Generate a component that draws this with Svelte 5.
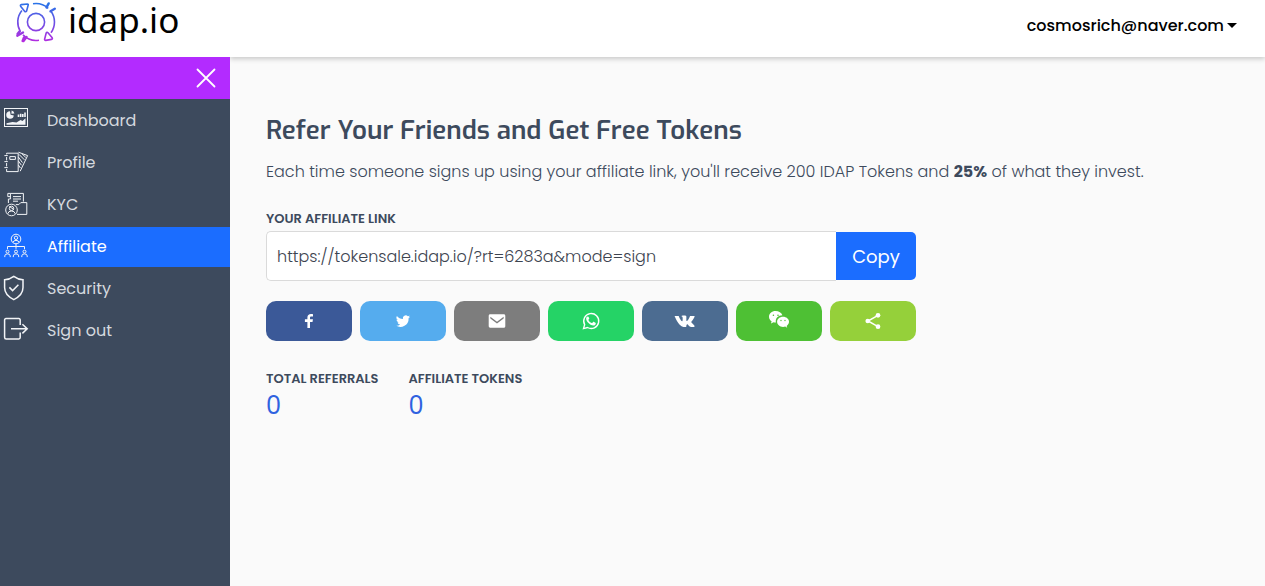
<script lang="ts">
	let open = $state(true);
	let active = $state("Affiliate");
	let link = $state("https://tokensale.idap.io/?rt=6283a&mode=sign");

	const menu = ["Dashboard", "Profile", "KYC", "Affiliate", "Security", "Sign out"];

	const stats = [
		{ label: "Total referrals", value: 0 },
		{ label: "Affiliate tokens", value: 0 },
	];

	function copyLink() {
		navigator.clipboard?.writeText(link);
	}
</script>

<svelte:head>
	<title>Affiliate</title>
</svelte:head>

{#snippet person(x, y)}
	<circle cx={x} cy={y} r="1.5" />
	<path d="M{x - 2.7} {y + 5.5}v-1.2q0-2 2.7-2t2.7 2v1.2" />
{/snippet}

<div class="page">
	<header>
		<a class="logo" href="/" aria-label="idap.io">
			<svg class="mark" width="42" height="44" viewBox="0 0 42 44" fill="none" stroke="url(#brand)" stroke-width="1.6">
				<defs>
					<linearGradient id="brand" gradientUnits="userSpaceOnUse" x1="22" y1="3" x2="20" y2="42">
						<stop offset="0" stop-color="#2874e8" />
						<stop offset="1" stop-color="#b52be0" />
					</linearGradient>
				</defs>
				<circle cx="21" cy="22" r="8.6" />
				<path d="M18 3.8a18.4 18.4 0 0 1 15.2 4.6M36 11.3a18.4 18.4 0 0 1 0 21.5M24 40.2a18.4 18.4 0 0 1-16-5.3M5.5 31.8a18.4 18.4 0 0 1 1.4-21.3" />
				<path d="M6.4 4.6l6-.6q1 0 .8 1l-1.6 6q-1 1.4-2 .2L5.6 6.2q-.6-1.2.8-1.6zM31.2 33q.8-1.2 1.8-.2l4.2 5q.6 1-.6 1.600l-6 1q-1.200 0-1-1.200z" stroke-linejoin="round" />
				<path d="M31.5 7.4l2.2-4M35.5 11.3l4.3-2.6M8 32.5l-5.700 3.200M4.500 31.500L2.500 34M11.500 37L8.500 41M9 37.500L7.600 41" stroke-width="2.4" stroke-linecap="round" />
			</svg>
			<span>idap.io</span>
		</a>
		<div class="topbar">
			<button class="account" type="button">cosmosrich@naver.com<i class="caret"></i></button>
		</div>
	</header>

	<div class="body">
		<aside class:closed={!open}>
			<div class="toggle">
				<button type="button" aria-label="Toggle menu" onclick={() => (open = !open)}>
					<svg width="20" height="20" viewBox="0 0 20 20" stroke="#fff" stroke-width="1.8" stroke-linecap="round">
						<path d="M1.5 1.5l17 17M18.5 1.5l-17 17" />
					</svg>
				</button>
			</div>
			<nav>
				{#each menu as item}
					<a href="#{item}" class:active={active === item} onclick={() => (active = item)}>
						<svg width="26" height="26" viewBox="0 0 26 26" fill="none" stroke="#f2f4f7" stroke-width="1">
							{#if item === "Dashboard"}
								<rect x="1.5" y="1.5" width="23" height="18" />
								<g transform="translate(0 -1)" fill="#f2f4f7" stroke="none">
									<path d="M7 5.2a3.8 3.8 0 1 0 3.8 4.4L7.6 8.8z" />
									<path d="M8.6 4.5a3.6 3.6 0 0 1 2.8 3L8.4 7.7z" />
									<path d="M3.5 18.8v-1.6l6-1.2 4 .6 4-2.5 2 .8 3-2.6v6.5z" />
								</g>
								<path d="M15.5 10V7.5M17.7 10V6.8M19.8 10V7M22 10V5.5" stroke-width="1.6" />
							{:else if item === "Profile"}
								<path d="M3.6 5.4V4.2h11.6v18.4H3.6V20M3.6 8v3.4M3.6 14v3.4M1.4 6.6h3.4M1.4 12.6h3.4M1.4 18.6h3.4" />
								<path d="M6.8 7.6h5.6v2.8H6.8zM15.4 3.2l9.2 3.4-7.4 15.6M15.4 8l4 5.6M15.4 12l3 4.2M15.4 16l2 3M16 5.4l5.4 5.4M19 4.8l3.8 3.6" />
							{:else if item === "KYC"}
								<path d="M5.4 12V8h2V2.4h13v8.2M7.4 2.4H4.8v3.2h2.6M10 5.6h8M10 8h8M10 10.2h5" />
								<path d="M14 23.4h9.8V11.6h-6l-2 2h-3" />
								<circle cx="8.5" cy="19" r="5.8" />
								<circle cx="8.5" cy="17.4" r="2.2" />
								<path d="M4.9 22.6q.4-2.6 3.6-2.6t3.6 2.6M6.3 15.4l4.4 3" />
							{:else if item === "Affiliate"}
								<circle cx="13" cy="6" r="4.8" />
								<circle cx="13" cy="4.8" r="1.7" />
								<path d="M10 9.4q.4-2 3-2t3 2M13 10.8v5M4.5 16v-2.5h17V16" />
								{@render person(4.5, 18.6)}
								{@render person(13, 18.6)}
								{@render person(21.5, 18.6)}
							{:else if item === "Security"}
								<path d="M10.8 1.4q4.2 3.2 9.2 3.4v7.8q0 7.6-9.2 12-9.2-4.4-9.2-12V4.8q5-.2 9.2-3.4z" stroke-width="1.5" />
								<path d="M6.4 12.4l3.2 3.2 5.8-5.8" stroke-width="1.5" />
							{:else}
								<path d="M17.2 8V3q0-1.4-1.4-1.4H3Q1.6 1.6 1.6 3v17.2q0 1.8 1.6 1.8h12.6q1.4 0 1.4-1.4v-5.2M8 11.8h16M19.4 7.2l4.8 4.6-4.8 4.6" stroke-width="1.5" />
							{/if}
						</svg>
						<span>{item}</span>
					</a>
				{/each}
			</nav>
		</aside>

		<main>
			<h1>Refer Your Friends and Get Free Tokens</h1>
			<p>
				Each time someone signs up using your affiliate link, you'll receive 200 IDAP Tokens and
				<b>25%</b> of what they invest.
			</p>

			<div class="share">
				<label for="link">Your affiliate link</label>
				<div class="field">
					<input id="link" type="text" readonly bind:value={link} />
					<button type="button" onclick={copyLink}>Copy</button>
				</div>
				<div class="social">
					<button type="button" class="facebook" aria-label="Facebook">
						<svg viewBox="0 0 40 40"><path d="M22 34V22h5l.9-5.6H22v-2.7c0-1.7.9-2.5 2.6-2.5H28V6.4C27 6.2 25.6 6 24 6c-4.4 0-7.2 2.6-7.2 7.1v3.3h-5V22h5v12z" /></svg>
					</button>
					<button type="button" class="twitter" aria-label="Twitter">
						<svg viewBox="0 0 40 40"><path d="M34.2 11.5c-1 .5-2.1.8-3.3.9 1.2-.7 2.1-1.8 2.5-3.2-1.1.7-2.4 1.1-3.7 1.4a5.8 5.8 0 0 0-9.9 5.3c-4.8-.2-9.1-2.6-12-6.1a5.8 5.8 0 0 0 1.8 7.8c-1 0-1.9-.3-2.6-.7 0 2.8 2 5.2 4.6 5.8-.8.2-1.7.2-2.6.1.7 2.3 2.9 4 5.4 4A11.7 11.7 0 0 1 5.8 29.2a16.5 16.5 0 0 0 25.4-14.7c1.1-.8 2.2-1.8 3-3z" /></svg>
					</button>
					<button type="button" class="email" aria-label="Email">
						<svg viewBox="0 0 40 40"><path fill-rule="evenodd" d="M6.3 6.7h27.4c1.6 0 2.9 1.3 2.9 3v20.6c0 1.7-1.3 3-2.9 3H6.3a3 3 0 0 1-2.9-3V9.7c0-1.7 1.3-3 2.9-3zM20 21.7L6.7 11.5v3.3L20 25l13.3-10.2v-3.3z" /></svg>
					</button>
					<button type="button" class="whatsapp" aria-label="WhatsApp">
						<svg viewBox="0 0 40 40">
							<path d="M5 35.2l2.3-8A15 15 0 1 1 13 33z" fill="none" stroke="#fff" stroke-width="2.8" />
							<path d="M14.9 11.6c-.4-.8-.8-.8-1.3-.8-1.4 0-3.3 1.5-3.3 4.6 0 3 2.2 6 4.2 8.2 2.6 2.8 6.4 5.4 10.3 5.4 2.6 0 4.8-1.9 4.8-4.6 0-.6-.3-.8-.8-1l-3.5-1.7c-.6-.2-.9-.1-1.3.4l-1.4 1.8c-.3.4-.7.4-1.2.2-3-1.3-5-3.2-6.4-5.7-.3-.5-.1-.8.2-1.2l1.2-1.5c.2-.4.2-.7.1-1z" />
						</svg>
					</button>
					<button type="button" class="vk" aria-label="VK">
						<svg viewBox="0 -2 40 40"><path d="M19 30h2.3s.7-.1 1.1-.5c.3-.4.3-1 .3-1s0-3.3 1.5-3.8c1.5-.5 3.3 3.2 5.3 4.5 1.5 1 2.6.8 2.6.8l5.3-.1s2.8-.2 1.5-2.4c-.1-.2-.8-1.6-4-4.6-3.4-3.1-2.9-2.6 1.2-8 2.5-3.3 3.4-5.3 3.1-6.2-.3-.8-2.2-.6-2.2-.6h-6s-.4-.1-.8.1c-.3.2-.5.7-.5.7s-1 2.5-2.2 4.7c-2.6 4.5-3.7 4.7-4.1 4.4-1-.7-.7-2.6-.7-4 0-4.3.6-6.1-1.3-6.6-.6-.1-1.1-.2-2.7-.3-2.1 0-3.9 0-4.9.5-.7.3-1.2 1.1-.9 1.1.4.1 1.3.3 1.8.9.6.9.6 2.8.6 2.8s.4 5.3-.8 6c-.9.4-2-.5-4.5-4.9C8.7 11.3 7.8 8.9 7.8 8.9s-.2-.4-.5-.7c-.4-.3-1-.4-1-.4H.7s-.9 0-1.2.4c-.3.3 0 1 0 1s4.4 10.5 9.4 15.7C13.5 29.9 19 30 19 30z" /></svg>
					</button>
					<button type="button" class="wechat" aria-label="WeChat">
						<svg viewBox="0 2 40 40">
							<path d="M13 2C5.500 2 0 7 0 13.5c0 3.9 2 7 5.2 9.2L4 27l5-2.7c1.6.4 3 .6 4.8.6-1.6-8.3 4.6-14.3 13-14.3C25.3 5.4 19.6 2 13 2z" />
							<path d="M40 23.7c0-5.600-5.400-10-11.800-10-6.800 0-12 4.400-12 10s5.200 10.200 12 10.200c1.400 0 2.800-.3 4.200-.7l4 2.200-1.100-3.600c2.800-2.100 4.700-4.900 4.700-8.100z" />
							<g fill="#4ec034">
								<circle cx="8.8" cy="10.4" r="1.6" />
								<circle cx="18" cy="10.4" r="1.6" />
								<circle cx="24" cy="21" r="1.3" />
								<circle cx="32" cy="21" r="1.3" />
							</g>
						</svg>
					</button>
					<button type="button" class="more" aria-label="Share">
						<svg viewBox="0 0 40 40">
							<path d="M30 8.7L10 20l20 11.3" fill="none" stroke="#fff" stroke-width="3" />
							<circle cx="30" cy="8.7" r="4.7" />
							<circle cx="9.5" cy="20" r="4.7" />
							<circle cx="30" cy="31.3" r="4.7" />
						</svg>
					</button>
				</div>
			</div>

			<dl>
				{#each stats as stat}
					<div>
						<dt>{stat.label}</dt>
						<dd>{stat.value}</dd>
					</div>
				{/each}
			</dl>
		</main>
	</div>
</div>

<style>
	:global(body) {
		margin: 0;
		background: #fafafa;
	}

	.page {
		display: flex;
		flex-direction: column;
		min-height: 100vh;
		font-family: Poppins, Inter, sans-serif;
		font-size: 16px;
		color: #3d4a5d;
	}

	button,
	input {
		font: inherit;
		margin: 0;
		border: 0;
		box-sizing: border-box;
	}

	button {
		padding: 0;
		background: none;
		cursor: pointer;
	}

	header {
		display: flex;
		height: 57px;
	}

	.logo {
		display: flex;
		box-sizing: border-box;
		width: 230px;
		padding-left: 15px;
		gap: 11px;
		background: #fff;
		color: #000;
		text-decoration: none;
		font-family: "Noto Sans", "Open Sans", sans-serif;
		font-size: 35px;
		font-weight: 400;
		line-height: 40px;
	}

	.topbar {
		display: flex;
		flex: 1;
		justify-content: flex-end;
		align-items: center;
		padding: 0 28px 6px 0;
		background: #fff;
		box-shadow: 0 2px 5px rgba(0, 0, 0, 0.2);
		clip-path: inset(0 0 -8px 0);
	}

	.account {
		display: flex;
		align-items: center;
		gap: 3px;
		color: #000;
		font-weight: 500;
	}

	.caret {
		border: 5px solid transparent;
		border-top-color: #000;
		border-bottom: 0;
	}

	.body {
		display: flex;
		flex: 1;
	}

	aside {
		flex: none;
		width: 230px;
		background: #3d4a5d;
	}

	aside.closed {
		width: 42px;
		overflow: hidden;
	}

	.toggle {
		display: flex;
		justify-content: flex-end;
		align-items: center;
		height: 42px;
		padding-right: 14px;
		background: #b32bff;
	}

	.toggle button {
		display: flex;
	}

	nav a {
		display: flex;
		align-items: center;
		gap: 18px;
		box-sizing: border-box;
		height: 40px;
		margin-top: 2px;
		padding: 0 0 2px 3px;
		color: #d5d9df;
		text-decoration: none;
	}

	nav a.active {
		background: #1b6dff;
		color: #fff;
	}

	main {
		flex: 1;
		padding: 57px 36px;
	}

	h1 {
		margin: 0 0 14px;
		font-family: Exo, Roboto, sans-serif;
		font-size: 26px;
		font-weight: 600;
		line-height: 34px;
	}

	p {
		margin: 0 0 29px;
		font-weight: 300;
		line-height: 20px;
	}

	b {
		font-weight: 700;
	}

	.share {
		max-width: 650px;
	}

	label,
	dt {
		display: block;
		font-size: 13px;
		font-weight: 600;
		line-height: 16px;
		text-transform: uppercase;
	}

	.field {
		display: flex;
		height: 50px;
		margin: 4px 0 20px;
	}

	.field input {
		flex: 1;
		min-width: 0;
		padding: 0 10px;
		border: 1px solid #dadada;
		border-right: 0;
		border-radius: 5px 0 0 5px;
		background: #fff;
		color: #3d4450;
		font-weight: 300;
	}

	.field button {
		width: 80px;
		margin: 1px 0;
		border-radius: 0 5px 5px 0;
		background: #1b6dff;
		color: #fff;
		font-size: 18px;
	}

	.social {
		display: flex;
		gap: 8px;
	}

	.social button {
		display: flex;
		flex: 1;
		justify-content: center;
		align-items: center;
		height: 40px;
		border-radius: 10px;
	}

	.social svg {
		width: 20px;
		height: 20px;
		fill: #fff;
		overflow: visible;
	}

	.facebook {
		background: #3b5998;
	}

	.twitter {
		background: #55acee;
	}

	.email {
		background: #7d7d7d;
	}

	.whatsapp {
		background: #25d366;
	}

	.vk {
		background: #4c6c91;
	}

	.wechat {
		background: #4ec034;
	}

	.more {
		background: #95d03a;
	}

	dl {
		display: flex;
		gap: 30px;
		margin: 30px 0 0;
	}

	dd {
		margin: 4px 0 0;
		color: #2f62e0;
		font-size: 24px;
		line-height: 30px;
	}
</style>
